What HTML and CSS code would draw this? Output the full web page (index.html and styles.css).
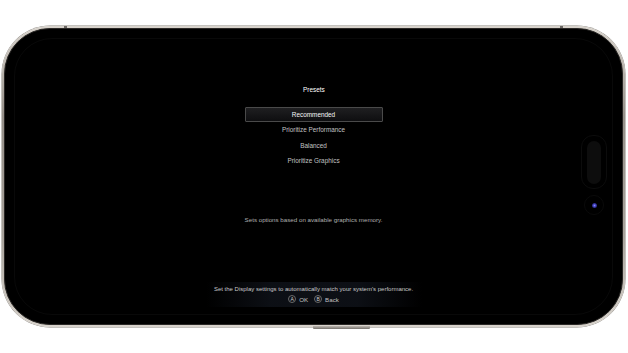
FILE: index.html
```html
<!DOCTYPE html>
<html>
<head>
<meta charset="utf-8">
<link rel="stylesheet" href="styles.css">
</head>
<body>
<div class="device">
  <div class="phone">
    <div class="screen">
      <div class="edge"></div>
      <div class="title">Presets</div>
      <ul class="menu">
        <li class="item selected">Recommended</li>
        <li class="item">Prioritize Performance</li>
        <li class="item">Balanced</li>
        <li class="item">Prioritize Graphics</li>
      </ul>
      <p class="desc">Sets options based on available graphics memory.</p>
      <div class="footer">
        <p class="hint">Set the Display settings to automatically match your system's performance.</p>
        <div class="keys">
          <span class="key">A</span><span class="label">OK</span>
          <span class="key">B</span><span class="label">Back</span>
        </div>
      </div>
      <div class="island-ring"><div class="island"></div></div>
      <div class="cam-ring"><div class="cam"></div></div>
    </div>
  </div>
  <div class="side-btn"></div>
  <div class="ant ant-l"></div>
  <div class="ant ant-r"></div>
</div>
</body>
</html>
```
FILE: styles.css
```css
html, body {
  margin: 0;
  padding: 0;
  background: #ffffff;
}
body {
  width: 628px;
  height: 353px;
  overflow: hidden;
  font-family: "Liberation Sans", Arial, sans-serif;
}
.device {
  position: relative;
  margin: 26px 0 0 2px;
  width: 623px;
  height: 301px;
}
.phone {
  width: 623px;
  height: 301px;
  box-sizing: border-box;
  padding: 2px;
  border-radius: 48px;
  background: linear-gradient(180deg, #d8d3cc 0%, #958f88 30%, #a8a29b 70%, #d8d3cc 100%);
  box-shadow: 0 0 0 0.5px #8a857f;
}
.screen {
  position: relative;
  height: 100%;
  box-sizing: border-box;
  border-radius: 46px;
  background: #000;
  border: 1px solid #2a2826;
  display: flex;
  flex-direction: column;
  align-items: center;
  color: #cfcfcf;
}
.edge {
  position: absolute;
  left: 9px;
  right: 9px;
  top: 9px;
  bottom: 9px;
  border-radius: 38px;
  border: 1px solid rgba(255,255,255,0.035);
}
.title {
  margin-top: 55px;
  font-size: 7px;
  line-height: 11px;
  color: #ffffff;
  transform: scaleX(0.92);
}
.menu {
  list-style: none;
  margin: 12px 0 0 0;
  padding: 0;
  display: flex;
  flex-direction: column;
  align-items: center;
}
.item {
  width: 138px;
  height: 15.3px;
  line-height: 15px;
  font-size: 6.4px;
  text-align: center;
  color: #c2c2c2;
  box-sizing: border-box;
}
.item.selected {
  color: #f6f6f6;
  border: 1px solid #4a4a4a;
  border-radius: 1px;
  line-height: 13px;
  background: linear-gradient(180deg, #1f1f21 0%, #0e0e10 100%);
}
.desc {
  margin: 47px 0 0 0;
  font-size: 6.2px;
  line-height: 9px;
  color: #b0b0b0;
}
.footer {
  margin-top: 58px;
  width: 216px;
  padding: 2px 0 3px;
  background: linear-gradient(90deg, rgba(18,22,30,0) 0%, rgba(18,22,30,0.7) 30%, rgba(18,22,30,0.7) 70%, rgba(18,22,30,0) 100%);
  display: flex;
  flex-direction: column;
  align-items: center;
}
.hint {
  margin: 0;
  font-size: 6px;
  line-height: 10px;
  color: #c8c8c8;
  white-space: nowrap;
}
.keys {
  display: flex;
  align-items: center;
  height: 10px;
  font-size: 6.2px;
  color: #c2c2c2;
}
.key {
  width: 6px;
  height: 6px;
  border-radius: 50%;
  border: 0.7px solid #6a6a6a;
  display: flex;
  align-items: center;
  justify-content: center;
  font-size: 5px;
  color: #cfcfcf;
  margin-right: 3px;
}
.label {
  margin-right: 6px;
}
.label:last-child {
  margin-right: 0;
}
.island-ring {
  position: absolute;
  right: 15px;
  top: 106px;
  width: 24px;
  height: 52px;
  border-radius: 12px;
  border: 1px solid #0c0c0c;
  display: flex;
  align-items: center;
  justify-content: center;
}
.island {
  width: 14px;
  height: 43px;
  border-radius: 7px;
  background: #0d0d0d;
}
.cam-ring {
  position: absolute;
  right: 18px;
  top: 166px;
  width: 18px;
  height: 18px;
  border-radius: 50%;
  border: 1px solid #0a0a0a;
  display: flex;
  align-items: center;
  justify-content: center;
}
.cam {
  width: 5px;
  height: 5px;
  border-radius: 50%;
  background: radial-gradient(circle, #8a8aff 0%, #3a3ab0 45%, #10103a 100%);
}
.side-btn {
  position: absolute;
  left: 311px;
  bottom: -2px;
  width: 57px;
  height: 3px;
  border-radius: 0 0 1px 1px;
  background: linear-gradient(180deg, #bdb7b0, #77736e);
}
.ant {
  position: absolute;
  top: 0;
  width: 3px;
  height: 2px;
  background: #6b6763;
}
.ant-l { left: 62px; }
.ant-r { left: 558px; }
```
